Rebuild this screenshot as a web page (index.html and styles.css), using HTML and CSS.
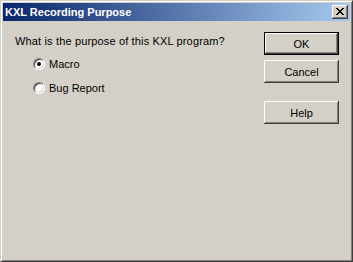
FILE: index.html
```html
<!DOCTYPE html>
<html>
<head>
<meta charset="utf-8">
<link rel="stylesheet" href="styles.css">
</head>
<body>
<div class="window">
  <div class="caption">
    <span class="title">KXL Recording Purpose</span>
    <div class="close">
      <svg width="8" height="7" viewBox="0 0 8 7"><path d="M0 0h2v1h1v1h2V1h1V0h2v1H7v1H6v1H5v1h1v1h1v1h1v1H6V6H5V5H3v1H2v1H0V6h1V5h1V4h1V3H2V2H1V1H0z" fill="#000"/></svg>
    </div>
  </div>
  <div class="client">
    <div class="main">
      <div class="question">What is the purpose of this KXL program?</div>
      <div class="options">
        <label class="opt"><span class="radio checked"></span><span>Macro</span></label>
        <label class="opt"><span class="radio"></span><span>Bug Report</span></label>
      </div>
    </div>
    <div class="buttons">
      <div class="btn default"><span>OK</span></div>
      <div class="btn"><span>Cancel</span></div>
      <div class="btn help"><span>Help</span></div>
    </div>
  </div>
</div>
</body>
</html>
```
FILE: styles.css
```css
html, body {
  margin: 0;
  padding: 0;
  background: #d4d0c8;
}
.window {
  width: 353px;
  height: 262px;
  box-sizing: border-box;
  background: #d4d0c8;
  border: 1px solid;
  border-color: #d4d0c8 #404040 #404040 #d4d0c8;
  box-shadow: inset 1px 1px 0 #fff, inset -1px -1px 0 #808080;
  padding: 1px;
  font-family: "Liberation Sans", Arial, sans-serif;
  font-size: 11px;
  color: #000;
  display: flex;
  flex-direction: column;
}
.caption {
  margin: 1px 1px 0 1px;
  height: 18px;
  box-sizing: border-box;
  background: linear-gradient(to right, #0a246a, #a6caf0);
  display: flex;
  align-items: center;
  justify-content: space-between;
  padding: 0 2px 0 2px;
}
.title {
  color: #fff;
  font-weight: bold;
  font-size: 11px;
  line-height: 18px;
}
.close {
  width: 16px;
  height: 14px;
  box-sizing: border-box;
  background: #d4d0c8;
  box-shadow: inset -1px -1px 0 #404040, inset 1px 1px 0 #fff, inset -2px -2px 0 #808080;
  display: flex;
  align-items: center;
  justify-content: center;
}
.close svg { display: block; margin: 0 0 1px 0; }
.client {
  flex: 1;
  display: flex;
  padding: 11px 12px 0 13px;
}
.main {
  flex: 1;
}
.question {
  line-height: 14px;
  margin-top: 2px;
  letter-spacing: 0.15px;
}
.options {
  display: flex;
  flex-direction: column;
  gap: 11px;
  margin-top: 9px;
  padding-left: 18px;
}
.opt {
  display: flex;
  align-items: center;
  gap: 4px;
  height: 13px;
}
.radio {
  width: 12px;
  height: 12px;
  border-radius: 50%;
  box-sizing: border-box;
  background: #fff;
  border: 1px solid;
  border-color: #808080 #fff #fff #808080;
  box-shadow: inset 1px 1px 0 #404040, inset -1px -1px 0 #d4d0c8;
  position: relative;
}
.radio.checked::after {
  content: "";
  position: absolute;
  left: 3px;
  top: 3px;
  width: 4px;
  height: 4px;
  border-radius: 50%;
  background: #000;
}
.buttons {
  display: flex;
  flex-direction: column;
  gap: 5px;
}
.btn {
  width: 75px;
  height: 23px;
  box-sizing: border-box;
  display: flex;
  align-items: center;
  justify-content: center;
  background: #d4d0c8;
  box-shadow: inset -1px -1px 0 #404040, inset 1px 1px 0 #fff, inset -2px -2px 0 #808080;
}
.btn.default {
  border: 1px solid #000;
}
.btn.help {
  margin-top: 13px;
}
```
